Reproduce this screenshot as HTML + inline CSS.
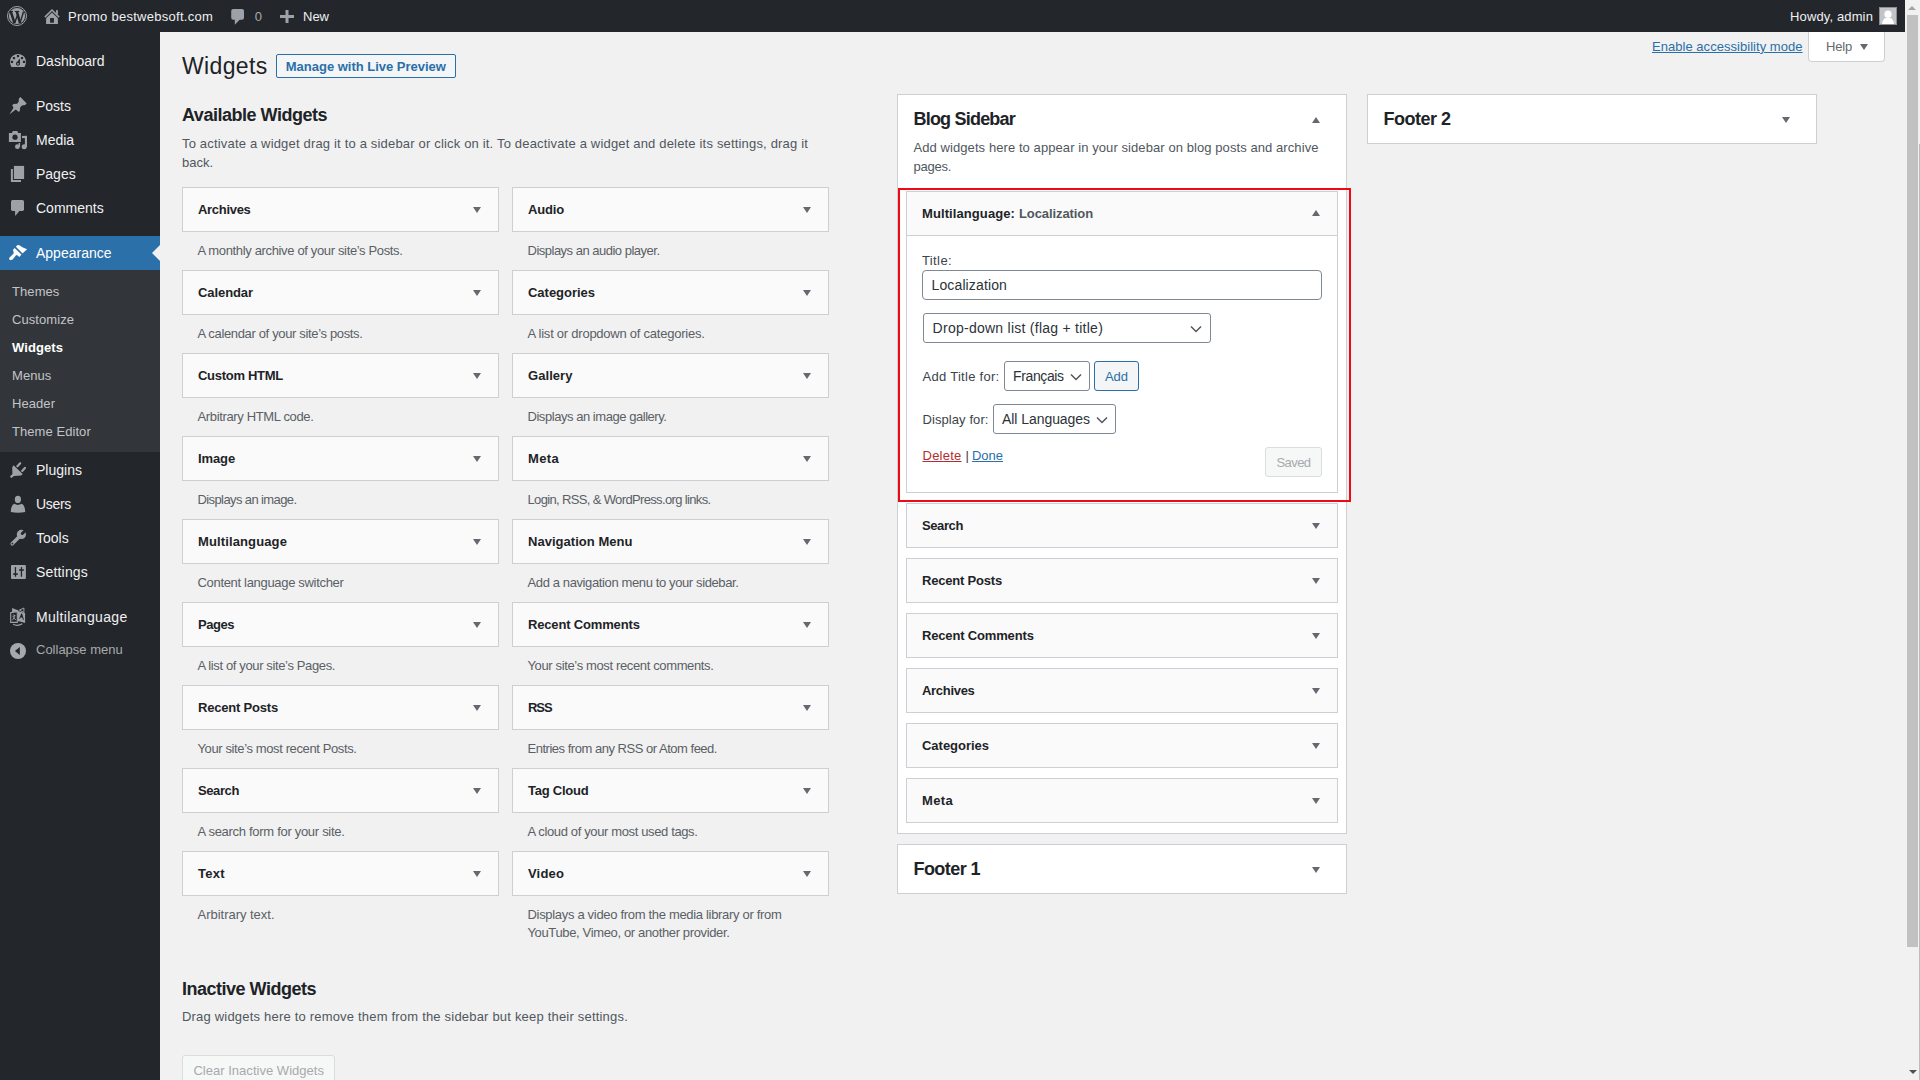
<!DOCTYPE html>
<html><head><meta charset="utf-8"><style>
html,body{margin:0;padding:0;width:1920px;height:1080px;overflow:hidden;background:#f1f1f1;font-family:"Liberation Sans", sans-serif;}
.t{position:absolute;white-space:nowrap;}
</style></head><body>
<div style="position:absolute;left:0px;top:0px;width:1905px;height:32px;background:#23272c;"></div><div style="position:absolute;left:0px;top:32px;width:160px;height:1048px;background:#23272c;"></div><div style="position:absolute;left:0px;top:236px;width:160px;height:34px;background:#2c70aa;"></div><div style="position:absolute;left:0px;top:270px;width:160px;height:182px;background:#32363b;"></div><div style="position:absolute;left:152px;top:245px;width:0;height:0;border-top:8px solid transparent;border-bottom:8px solid transparent;border-right:8px solid #f1f1f1"></div><div style="position:absolute;left:1905px;top:0px;width:15px;height:1080px;background:#f1f1f1;"></div><div style="position:absolute;left:1907px;top:15px;width:11px;height:932px;background:#c1c1c1;"></div><div style="position:absolute;left:1919px;top:144px;width:1px;height:936px;background:#bcbcbc;"></div><div style="position:absolute;left:1908px;top:6px;width:0;height:0;border-left:4px solid transparent;border-right:4px solid transparent;border-bottom:4px solid #a3a3a3"></div><div style="position:absolute;left:1908.5px;top:1070px;width:0;height:0;border-left:4px solid transparent;border-right:4px solid transparent;border-top:4px solid #505050"></div><div style="position:absolute;left:276px;top:54px;width:180px;height:24px;background:#f3f5f6;border:1px solid #2a6fa8;box-sizing:border-box;border-radius:2px;"></div><div style="position:absolute;left:1808px;top:32px;width:77px;height:30px;background:#ffffff;border:1px solid #ccd0d4;box-sizing:border-box;border-top:none;border-radius:0 0 4px 4px;"></div><div style="position:absolute;left:1860.0px;top:44px;width:0;height:0;border-left:4.0px solid transparent;border-right:4.0px solid transparent;border-top:6px solid #646970"></div><div style="position:absolute;left:182px;top:187px;width:317px;height:45px;background:#fafafa;border:1px solid #ccd0d4;box-sizing:border-box;"></div><div style="position:absolute;left:473.0px;top:207px;width:0;height:0;border-left:4.0px solid transparent;border-right:4.0px solid transparent;border-top:6px solid #646970"></div><div style="position:absolute;left:512px;top:187px;width:317px;height:45px;background:#fafafa;border:1px solid #ccd0d4;box-sizing:border-box;"></div><div style="position:absolute;left:803.0px;top:207px;width:0;height:0;border-left:4.0px solid transparent;border-right:4.0px solid transparent;border-top:6px solid #646970"></div><div style="position:absolute;left:182px;top:270px;width:317px;height:45px;background:#fafafa;border:1px solid #ccd0d4;box-sizing:border-box;"></div><div style="position:absolute;left:473.0px;top:290px;width:0;height:0;border-left:4.0px solid transparent;border-right:4.0px solid transparent;border-top:6px solid #646970"></div><div style="position:absolute;left:512px;top:270px;width:317px;height:45px;background:#fafafa;border:1px solid #ccd0d4;box-sizing:border-box;"></div><div style="position:absolute;left:803.0px;top:290px;width:0;height:0;border-left:4.0px solid transparent;border-right:4.0px solid transparent;border-top:6px solid #646970"></div><div style="position:absolute;left:182px;top:353px;width:317px;height:45px;background:#fafafa;border:1px solid #ccd0d4;box-sizing:border-box;"></div><div style="position:absolute;left:473.0px;top:373px;width:0;height:0;border-left:4.0px solid transparent;border-right:4.0px solid transparent;border-top:6px solid #646970"></div><div style="position:absolute;left:512px;top:353px;width:317px;height:45px;background:#fafafa;border:1px solid #ccd0d4;box-sizing:border-box;"></div><div style="position:absolute;left:803.0px;top:373px;width:0;height:0;border-left:4.0px solid transparent;border-right:4.0px solid transparent;border-top:6px solid #646970"></div><div style="position:absolute;left:182px;top:436px;width:317px;height:45px;background:#fafafa;border:1px solid #ccd0d4;box-sizing:border-box;"></div><div style="position:absolute;left:473.0px;top:456px;width:0;height:0;border-left:4.0px solid transparent;border-right:4.0px solid transparent;border-top:6px solid #646970"></div><div style="position:absolute;left:512px;top:436px;width:317px;height:45px;background:#fafafa;border:1px solid #ccd0d4;box-sizing:border-box;"></div><div style="position:absolute;left:803.0px;top:456px;width:0;height:0;border-left:4.0px solid transparent;border-right:4.0px solid transparent;border-top:6px solid #646970"></div><div style="position:absolute;left:182px;top:519px;width:317px;height:45px;background:#fafafa;border:1px solid #ccd0d4;box-sizing:border-box;"></div><div style="position:absolute;left:473.0px;top:539px;width:0;height:0;border-left:4.0px solid transparent;border-right:4.0px solid transparent;border-top:6px solid #646970"></div><div style="position:absolute;left:512px;top:519px;width:317px;height:45px;background:#fafafa;border:1px solid #ccd0d4;box-sizing:border-box;"></div><div style="position:absolute;left:803.0px;top:539px;width:0;height:0;border-left:4.0px solid transparent;border-right:4.0px solid transparent;border-top:6px solid #646970"></div><div style="position:absolute;left:182px;top:602px;width:317px;height:45px;background:#fafafa;border:1px solid #ccd0d4;box-sizing:border-box;"></div><div style="position:absolute;left:473.0px;top:622px;width:0;height:0;border-left:4.0px solid transparent;border-right:4.0px solid transparent;border-top:6px solid #646970"></div><div style="position:absolute;left:512px;top:602px;width:317px;height:45px;background:#fafafa;border:1px solid #ccd0d4;box-sizing:border-box;"></div><div style="position:absolute;left:803.0px;top:622px;width:0;height:0;border-left:4.0px solid transparent;border-right:4.0px solid transparent;border-top:6px solid #646970"></div><div style="position:absolute;left:182px;top:685px;width:317px;height:45px;background:#fafafa;border:1px solid #ccd0d4;box-sizing:border-box;"></div><div style="position:absolute;left:473.0px;top:705px;width:0;height:0;border-left:4.0px solid transparent;border-right:4.0px solid transparent;border-top:6px solid #646970"></div><div style="position:absolute;left:512px;top:685px;width:317px;height:45px;background:#fafafa;border:1px solid #ccd0d4;box-sizing:border-box;"></div><div style="position:absolute;left:803.0px;top:705px;width:0;height:0;border-left:4.0px solid transparent;border-right:4.0px solid transparent;border-top:6px solid #646970"></div><div style="position:absolute;left:182px;top:768px;width:317px;height:45px;background:#fafafa;border:1px solid #ccd0d4;box-sizing:border-box;"></div><div style="position:absolute;left:473.0px;top:788px;width:0;height:0;border-left:4.0px solid transparent;border-right:4.0px solid transparent;border-top:6px solid #646970"></div><div style="position:absolute;left:512px;top:768px;width:317px;height:45px;background:#fafafa;border:1px solid #ccd0d4;box-sizing:border-box;"></div><div style="position:absolute;left:803.0px;top:788px;width:0;height:0;border-left:4.0px solid transparent;border-right:4.0px solid transparent;border-top:6px solid #646970"></div><div style="position:absolute;left:182px;top:851px;width:317px;height:45px;background:#fafafa;border:1px solid #ccd0d4;box-sizing:border-box;"></div><div style="position:absolute;left:473.0px;top:871px;width:0;height:0;border-left:4.0px solid transparent;border-right:4.0px solid transparent;border-top:6px solid #646970"></div><div style="position:absolute;left:512px;top:851px;width:317px;height:45px;background:#fafafa;border:1px solid #ccd0d4;box-sizing:border-box;"></div><div style="position:absolute;left:803.0px;top:871px;width:0;height:0;border-left:4.0px solid transparent;border-right:4.0px solid transparent;border-top:6px solid #646970"></div><div style="position:absolute;left:182px;top:1055px;width:153px;height:40px;background:#f6f7f7;border:1px solid #dcdcde;box-sizing:border-box;border-radius:3px;"></div><div style="position:absolute;left:897px;top:94px;width:450px;height:740px;background:#ffffff;border:1px solid #ccd0d4;box-sizing:border-box;"></div><div style="position:absolute;left:1312.0px;top:116.5px;width:0;height:0;border-left:4.0px solid transparent;border-right:4.0px solid transparent;border-bottom:6px solid #646970"></div><div style="position:absolute;left:906px;top:191px;width:432px;height:302px;background:#ffffff;border:1px solid #ccd0d4;box-sizing:border-box;"></div><div style="position:absolute;left:906px;top:191px;width:432px;height:45px;background:#fafafa;border:1px solid #ccd0d4;box-sizing:border-box;"></div><div style="position:absolute;left:1312.0px;top:210px;width:0;height:0;border-left:4.0px solid transparent;border-right:4.0px solid transparent;border-bottom:6px solid #646970"></div><div style="position:absolute;left:922px;top:270px;width:400px;height:30px;background:#ffffff;border:1px solid #7e8993;box-sizing:border-box;border-radius:4px;"></div><div style="position:absolute;left:923px;top:313px;width:288px;height:30px;background:#ffffff;border:1px solid #7e8993;box-sizing:border-box;border-radius:3px;"></div><div style="position:absolute;left:1004px;top:361px;width:86px;height:30px;background:#ffffff;border:1px solid #7e8993;box-sizing:border-box;border-radius:3px;"></div><div style="position:absolute;left:1094px;top:361px;width:45px;height:30px;background:#f3f5f6;border:1px solid #2a6fa8;box-sizing:border-box;border-radius:3px;"></div><div style="position:absolute;left:993px;top:404px;width:123px;height:30px;background:#ffffff;border:1px solid #7e8993;box-sizing:border-box;border-radius:3px;"></div><div style="position:absolute;left:1265px;top:447px;width:57px;height:30px;background:#f6f7f7;border:1px solid #dcdcde;box-sizing:border-box;border-radius:3px;"></div><svg style="position:absolute;left:1190px;top:324.5px" width="12" height="8" viewBox="0 0 12 8"><path d="M1 1.5 L6 6.5 L11 1.5" fill="none" stroke="#50575e" stroke-width="1.5"/></svg><svg style="position:absolute;left:1069.8px;top:372.5px" width="12" height="8" viewBox="0 0 12 8"><path d="M1 1.5 L6 6.5 L11 1.5" fill="none" stroke="#50575e" stroke-width="1.5"/></svg><svg style="position:absolute;left:1095.8px;top:415.5px" width="12" height="8" viewBox="0 0 12 8"><path d="M1 1.5 L6 6.5 L11 1.5" fill="none" stroke="#50575e" stroke-width="1.5"/></svg><div style="position:absolute;left:906px;top:503px;width:432px;height:45px;background:#fafafa;border:1px solid #ccd0d4;box-sizing:border-box;"></div><div style="position:absolute;left:1312.0px;top:523px;width:0;height:0;border-left:4.0px solid transparent;border-right:4.0px solid transparent;border-top:6px solid #646970"></div><div style="position:absolute;left:906px;top:558px;width:432px;height:45px;background:#fafafa;border:1px solid #ccd0d4;box-sizing:border-box;"></div><div style="position:absolute;left:1312.0px;top:578px;width:0;height:0;border-left:4.0px solid transparent;border-right:4.0px solid transparent;border-top:6px solid #646970"></div><div style="position:absolute;left:906px;top:613px;width:432px;height:45px;background:#fafafa;border:1px solid #ccd0d4;box-sizing:border-box;"></div><div style="position:absolute;left:1312.0px;top:633px;width:0;height:0;border-left:4.0px solid transparent;border-right:4.0px solid transparent;border-top:6px solid #646970"></div><div style="position:absolute;left:906px;top:668px;width:432px;height:45px;background:#fafafa;border:1px solid #ccd0d4;box-sizing:border-box;"></div><div style="position:absolute;left:1312.0px;top:688px;width:0;height:0;border-left:4.0px solid transparent;border-right:4.0px solid transparent;border-top:6px solid #646970"></div><div style="position:absolute;left:906px;top:723px;width:432px;height:45px;background:#fafafa;border:1px solid #ccd0d4;box-sizing:border-box;"></div><div style="position:absolute;left:1312.0px;top:743px;width:0;height:0;border-left:4.0px solid transparent;border-right:4.0px solid transparent;border-top:6px solid #646970"></div><div style="position:absolute;left:906px;top:778px;width:432px;height:45px;background:#fafafa;border:1px solid #ccd0d4;box-sizing:border-box;"></div><div style="position:absolute;left:1312.0px;top:798px;width:0;height:0;border-left:4.0px solid transparent;border-right:4.0px solid transparent;border-top:6px solid #646970"></div><div style="position:absolute;left:898px;top:188px;width:453px;height:314px;background:transparent;border:2px solid #ee0a12;box-sizing:border-box;"></div><div style="position:absolute;left:897px;top:844px;width:450px;height:50px;background:#ffffff;border:1px solid #ccd0d4;box-sizing:border-box;"></div><div style="position:absolute;left:1312.0px;top:867px;width:0;height:0;border-left:4.0px solid transparent;border-right:4.0px solid transparent;border-top:6px solid #646970"></div><div style="position:absolute;left:1367px;top:94px;width:450px;height:50px;background:#ffffff;border:1px solid #ccd0d4;box-sizing:border-box;"></div><div style="position:absolute;left:1782.0px;top:116.5px;width:0;height:0;border-left:4.0px solid transparent;border-right:4.0px solid transparent;border-top:6px solid #646970"></div><svg style="position:absolute;left:0;top:0" width="1920" height="1080" viewBox="0 0 1920 1080">
<g fill="#9ca2a7">
<!-- WP logo -->
<circle cx="17" cy="16" r="9.5" fill="none" stroke="#9ca2a7" stroke-width="1"/>
<circle cx="17" cy="16" r="8.1"/>
<g stroke="#23272c" stroke-linecap="butt" fill="none">
<line x1="10.7" y1="11.5" x2="14.55" y2="23.1" stroke-width="2.5"/>
<line x1="14.55" y1="23.1" x2="17.4" y2="15.6" stroke-width="1.4"/>
<line x1="16.8" y1="11.3" x2="20.05" y2="23.1" stroke-width="2.5"/>
<line x1="20.05" y1="23.1" x2="23.5" y2="11.7" stroke-width="1.4"/>
</g>
<rect x="9.05" y="10.9" width="3.9" height="1.1" fill="#23272c"/>
<rect x="14.8" y="10.9" width="4.4" height="1.1" fill="#23272c"/>
<!-- home -->
<polyline points="45.4,16.6 52,10 58.6,16.6" fill="none" stroke="#9ca2a7" stroke-width="1.5" stroke-linecap="square"/>
<rect x="56.1" y="10.1" width="1.8" height="4"/>
<path d="M52 12.5 L46.1 18.3 L46.1 24 L57.9 24 L57.9 18.3 Z"/>
<rect x="50.1" y="18" width="3.8" height="4.7" fill="#23272c"/>
<!-- comment bubble admin bar -->
<rect x="231.2" y="9" width="12.8" height="10.8" rx="2"/>
<path d="M234.8 19 L234.8 24.8 L240.4 19 Z"/>
<!-- plus -->
<rect x="280" y="15" width="14" height="3"/>
<rect x="285.5" y="10" width="3" height="13"/>
<!-- avatar -->
<rect x="1879.5" y="7.5" width="17" height="17" fill="#c3c4c7" stroke="#8c8f94" stroke-width="1"/>
<circle cx="1888" cy="14.2" r="3.6" fill="#fff"/>
<path d="M1882 24 C1882.5 19.5 1885 17.6 1888 17.6 C1891 17.6 1893.5 19.5 1894 24 Z" fill="#fff"/>

<!-- dashboard gauge -->
<path d="M11.5 67 C9.3 63 9.6 58.6 12.6 56 C15.6 53.2 20.4 53.2 23.4 56 C26.4 58.6 26.7 63 24.5 67 Z"/>
<g fill="#23272c">
<rect x="16.9" y="55" width="2.2" height="2.2"/>
<rect x="12.9" y="57" width="2.2" height="2.2"/>
<rect x="20.9" y="57" width="2.2" height="2.2"/>
<rect x="10.9" y="60.8" width="2.2" height="2.2"/>
<rect x="22.9" y="60.8" width="2.2" height="2.2"/>
<path d="M19.9 58.4 L20 63.6 C20 65 19.1 65.8 18 65.8 C16.9 65.8 16 65 16 63.8 C16 62.9 16.5 62.2 17.2 61.8 Z"/>
</g>
<circle cx="18" cy="63.8" r="0.9"/>
<!-- posts pin -->
<path d="M20.44 97.11 L26.67 103.56 L25.11 105.11 L22 105.56 L20.22 107.33 L19.78 111.33 L18.44 111.78 L15.78 109.56 L9.33 114.44 L13.56 107.78 L12.22 105.33 L13.56 104 L17.11 103.78 L18.67 101.78 L18.89 98.44 Z"/>
<!-- media -->
<path d="M8.9 132.9 L12 132.9 L12.8 130.9 L17.3 130.9 L18.1 132.9 L20.9 132.9 L20.9 142 L8.9 142 Z"/>
<circle cx="15" cy="137.2" r="2.6" fill="#23272c"/>
<rect x="22" y="135.9" width="5" height="2.2"/>
<rect x="24.9" y="135.9" width="2.1" height="11"/>
<circle cx="24.2" cy="146.7" r="2.5"/>
<rect x="18.6" y="143" width="1.5" height="4"/>
<circle cx="17.4" cy="146.7" r="2.4"/>
<!-- pages -->
<rect x="13.9" y="165.9" width="10.2" height="13.1"/>
<path d="M10.9 168.9 L12.9 168.9 L12.9 180 L21 180 L21 182 L10.9 182 Z"/>
<!-- comments -->
<rect x="11" y="200" width="13" height="10.9" rx="1.6"/>
<path d="M15 210 L15.2 216 L20.2 210 Z"/>
<!-- plugins -->
<path d="M13.56 465.33 L22.67 474 L21.11 475.56 L14.44 476 L12.44 474.89 L12.22 467.56 Z"/>
<line x1="11.4" y1="476.6" x2="13.4" y2="474.8" stroke="#9ca2a7" stroke-width="2.4" stroke-linecap="round"/>
<line x1="17.4" y1="466.2" x2="20.2" y2="463.2" stroke="#9ca2a7" stroke-width="2.2" stroke-linecap="round"/>
<line x1="22.2" y1="470.9" x2="24.9" y2="467.9" stroke="#9ca2a7" stroke-width="2.2" stroke-linecap="round"/>
<!-- users -->
<ellipse cx="17.9" cy="499.4" rx="3.1" ry="3.7"/>
<path d="M10.8 512 C10.8 507 12.5 504.2 14.8 503.8 C16 505.3 19.8 505.3 21.2 503.8 C23.5 504.2 25.2 507 25.2 512 C20.5 513 15.5 513 10.8 512 Z"/>
<!-- tools -->
<line x1="20" y1="536" x2="12.2" y2="543.8" stroke="#9ca2a7" stroke-width="3.6" stroke-linecap="round"/>
<circle cx="21.4" cy="534.4" r="4.6"/>
<line x1="22.3" y1="533.5" x2="26.5" y2="529.3" stroke="#23272c" stroke-width="3" stroke-linecap="round"/>
<circle cx="12.4" cy="543.6" r="0.9" fill="#23272c"/>
<!-- settings -->
<rect x="11" y="565" width="14.9" height="14" rx="1"/>
<g fill="#23272c">
<rect x="14.8" y="567.1" width="1.3" height="9.6"/>
<rect x="13.2" y="573.3" width="4.6" height="1.6"/>
<rect x="20.8" y="567.1" width="1.3" height="9.6"/>
<rect x="19.1" y="569.2" width="4.7" height="1.6"/>
</g>
<!-- multilanguage -->
<path d="M12.07 608.04 L18.6 610.5 L18.2 612 L12.07 612.1 Z"/>
<path d="M19.4 610.07 L23.9 608.04 L23.9 612.5 Z" fill="none" stroke="#9ca2a7" stroke-width="1"/>
<path d="M10.7 612.6 L17.3 611.7 L17.3 622.4 L10.7 622.4 Z" fill="none" stroke="#9ca2a7" stroke-width="1.1"/>
<path d="M17.57 611.1 L25.1 612.9 L25.1 622.9 L20.2 621.5 L17.57 621.3 Z"/>
<path d="M19.1 618.7 L21.3 613.6 L22.1 613.6 L24 619.8 L22.9 619.7 L22.3 617.6 L20.6 617.6 L20 618.8 Z" fill="#23272c"/>
<g stroke="#9ca2a7" stroke-width="0.9" fill="none">
<path d="M13.2 614.8 L15.6 615.8"/>
<path d="M12.4 616.2 L14.8 617.4"/>
<path d="M14.4 615 L13.9 617.8 L12.5 620.2"/>
<path d="M14.2 618 L15.8 620"/>
</g>
<path d="M13.1 624.2 Q17.6 626.6 22.3 623.7" fill="none" stroke="#9ca2a7" stroke-width="1.2"/>
<!-- collapse -->
<circle cx="18" cy="651" r="8" fill="#a7aaad"/>
<path d="M14.9 651 L19.8 647.1 L19.8 654.9 Z" fill="#23272c"/>
</g>
<!-- appearance brush (white) -->
<g fill="#ffffff">
<path d="M15.78 246.67 L17.56 245.11 L19.33 245.33 L22.89 247.56 L27.11 249.33 L22.44 253.56 Z"/>
<path d="M12.89 250 L14.67 248 L21.56 254.44 L19.33 256.89 L17.56 255.56 L16.22 255.11 L12.67 259.56 L10.44 260.22 L9.11 259.33 L9.33 257.78 L13.78 253.33 L13.33 251.11 Z"/>
</g>
<line x1="15.4" y1="247.4" x2="22.3" y2="254.2" stroke="#2c70aa" stroke-width="1.1"/>
</svg>

<div class="t" id="t0" style="left:68px;top:8.50px;font-size:13px;line-height:16px;font-weight:400;color:#f0f0f1;letter-spacing:0.264px;">Promo bestwebsoft.com</div><div class="t" id="t1" style="left:254.8px;top:8.50px;font-size:13px;line-height:16px;font-weight:400;color:#a7aaad;letter-spacing:-1.034px;">0</div><div class="t" id="t2" style="left:303px;top:8.50px;font-size:13px;line-height:16px;font-weight:400;color:#f0f0f1;letter-spacing:-0.005px;">New</div><div class="t" id="t3" style="left:1790px;top:8.50px;font-size:13px;line-height:16px;font-weight:400;color:#f0f0f1;letter-spacing:0.133px;">Howdy, admin</div><div class="t" id="t4" style="left:36px;top:52.15px;font-size:14px;line-height:18px;font-weight:400;color:#f0f0f1;letter-spacing:0.000px;">Dashboard</div><div class="t" id="t5" style="left:36px;top:97.15px;font-size:14px;line-height:18px;font-weight:400;color:#f0f0f1;letter-spacing:0.000px;">Posts</div><div class="t" id="t6" style="left:36px;top:131.15px;font-size:14px;line-height:18px;font-weight:400;color:#f0f0f1;letter-spacing:0.000px;">Media</div><div class="t" id="t7" style="left:36px;top:165.15px;font-size:14px;line-height:18px;font-weight:400;color:#f0f0f1;letter-spacing:0.000px;">Pages</div><div class="t" id="t8" style="left:36px;top:199.15px;font-size:14px;line-height:18px;font-weight:400;color:#f0f0f1;letter-spacing:0.000px;">Comments</div><div class="t" id="t9" style="left:36px;top:244.15px;font-size:14px;line-height:18px;font-weight:400;color:#ffffff;letter-spacing:0.000px;">Appearance</div><div class="t" id="t10" style="left:36px;top:460.65px;font-size:14px;line-height:18px;font-weight:400;color:#f0f0f1;letter-spacing:0.000px;">Plugins</div><div class="t" id="t11" style="left:36px;top:494.65px;font-size:14px;line-height:18px;font-weight:400;color:#f0f0f1;letter-spacing:-0.312px;">Users</div><div class="t" id="t12" style="left:36px;top:528.65px;font-size:14px;line-height:18px;font-weight:400;color:#f0f0f1;letter-spacing:0.000px;">Tools</div><div class="t" id="t13" style="left:36px;top:562.65px;font-size:14px;line-height:18px;font-weight:400;color:#f0f0f1;letter-spacing:0.176px;">Settings</div><div class="t" id="t14" style="left:36px;top:608.15px;font-size:14px;line-height:18px;font-weight:400;color:#f0f0f1;letter-spacing:0.333px;">Multilanguage</div><div class="t" id="t15" style="left:12px;top:283.50px;font-size:13px;line-height:16px;font-weight:400;color:#c3c4c7;letter-spacing:0.078px;">Themes</div><div class="t" id="t16" style="left:12px;top:311.50px;font-size:13px;line-height:16px;font-weight:400;color:#c3c4c7;letter-spacing:0.068px;">Customize</div><div class="t" id="t17" style="left:12px;top:339.50px;font-size:13px;line-height:16px;font-weight:700;color:#ffffff;letter-spacing:0.072px;">Widgets</div><div class="t" id="t18" style="left:12px;top:367.50px;font-size:13px;line-height:16px;font-weight:400;color:#c3c4c7;letter-spacing:0.078px;">Menus</div><div class="t" id="t19" style="left:12px;top:395.50px;font-size:13px;line-height:16px;font-weight:400;color:#c3c4c7;letter-spacing:0.071px;">Header</div><div class="t" id="t20" style="left:12px;top:423.50px;font-size:13px;line-height:16px;font-weight:400;color:#c3c4c7;letter-spacing:0.065px;">Theme Editor</div><div class="t" id="t21" style="left:36px;top:642.00px;font-size:13px;line-height:16px;font-weight:400;color:#a7aaad;letter-spacing:0.000px;">Collapse menu</div><div class="t" id="t22" style="left:182px;top:51.83px;font-size:23px;line-height:29px;font-weight:400;color:#1d2327;letter-spacing:0.344px;">Widgets</div><div class="t" id="t23" style="left:285.8px;top:58.50px;font-size:13px;line-height:16px;font-weight:700;color:#2a6fa8;letter-spacing:-0.016px;">Manage with Live Preview</div><div class="t" id="t24" style="left:1652px;top:38.50px;font-size:13px;line-height:16px;font-weight:400;color:#2a6fa8;letter-spacing:0.037px;text-decoration:underline;">Enable accessibility mode</div><div class="t" id="t25" style="left:1826px;top:39.00px;font-size:13px;line-height:16px;font-weight:400;color:#646970;letter-spacing:-0.188px;">Help</div><div class="t" id="t26" style="left:182px;top:103.96px;font-size:18px;line-height:22px;font-weight:700;color:#1d2327;letter-spacing:-0.483px;">Available Widgets</div><div class="t" id="t27" style="left:182px;top:135.50px;font-size:13px;line-height:16px;font-weight:400;color:#50575e;letter-spacing:0.177px;">To activate a widget drag it to a sidebar or click on it. To deactivate a widget and delete its settings, drag it</div><div class="t" id="t28" style="left:182px;top:154.50px;font-size:13px;line-height:16px;font-weight:400;color:#50575e;letter-spacing:0.000px;">back.</div><div class="t" id="t29" style="left:198px;top:201.50px;font-size:13px;line-height:16px;font-weight:700;color:#1d2327;letter-spacing:-0.303px;">Archives</div><div class="t" id="t30" style="left:197.5px;top:243.20px;font-size:13px;line-height:16px;font-weight:400;color:#5a6066;letter-spacing:-0.351px;">A monthly archive of your site’s Posts.</div><div class="t" id="t31" style="left:528px;top:201.50px;font-size:13px;line-height:16px;font-weight:700;color:#1d2327;letter-spacing:-0.166px;">Audio</div><div class="t" id="t32" style="left:527.5px;top:243.20px;font-size:13px;line-height:16px;font-weight:400;color:#5a6066;letter-spacing:-0.501px;">Displays an audio player.</div><div class="t" id="t33" style="left:198px;top:284.50px;font-size:13px;line-height:16px;font-weight:700;color:#1d2327;letter-spacing:-0.080px;">Calendar</div><div class="t" id="t34" style="left:197.5px;top:326.20px;font-size:13px;line-height:16px;font-weight:400;color:#5a6066;letter-spacing:-0.346px;">A calendar of your site’s posts.</div><div class="t" id="t35" style="left:528px;top:284.50px;font-size:13px;line-height:16px;font-weight:700;color:#1d2327;letter-spacing:-0.020px;">Categories</div><div class="t" id="t36" style="left:527.5px;top:326.20px;font-size:13px;line-height:16px;font-weight:400;color:#5a6066;letter-spacing:-0.242px;">A list or dropdown of categories.</div><div class="t" id="t37" style="left:198px;top:367.50px;font-size:13px;line-height:16px;font-weight:700;color:#1d2327;letter-spacing:-0.283px;">Custom HTML</div><div class="t" id="t38" style="left:197.5px;top:409.20px;font-size:13px;line-height:16px;font-weight:400;color:#5a6066;letter-spacing:-0.353px;">Arbitrary HTML code.</div><div class="t" id="t39" style="left:528px;top:367.50px;font-size:13px;line-height:16px;font-weight:700;color:#1d2327;letter-spacing:0.058px;">Gallery</div><div class="t" id="t40" style="left:527.5px;top:409.20px;font-size:13px;line-height:16px;font-weight:400;color:#5a6066;letter-spacing:-0.453px;">Displays an image gallery.</div><div class="t" id="t41" style="left:198px;top:450.50px;font-size:13px;line-height:16px;font-weight:700;color:#1d2327;letter-spacing:-0.116px;">Image</div><div class="t" id="t42" style="left:197.5px;top:492.20px;font-size:13px;line-height:16px;font-weight:400;color:#5a6066;letter-spacing:-0.602px;">Displays an image.</div><div class="t" id="t43" style="left:528px;top:450.50px;font-size:13px;line-height:16px;font-weight:700;color:#1d2327;letter-spacing:0.344px;">Meta</div><div class="t" id="t44" style="left:527.5px;top:492.20px;font-size:13px;line-height:16px;font-weight:400;color:#5a6066;letter-spacing:-0.646px;">Login, RSS, &amp; WordPress.org links.</div><div class="t" id="t45" style="left:198px;top:533.50px;font-size:13px;line-height:16px;font-weight:700;color:#1d2327;letter-spacing:0.124px;">Multilanguage</div><div class="t" id="t46" style="left:197.5px;top:575.20px;font-size:13px;line-height:16px;font-weight:400;color:#5a6066;letter-spacing:-0.318px;">Content language switcher</div><div class="t" id="t47" style="left:528px;top:533.50px;font-size:13px;line-height:16px;font-weight:700;color:#1d2327;letter-spacing:0.032px;">Navigation Menu</div><div class="t" id="t48" style="left:527.5px;top:575.20px;font-size:13px;line-height:16px;font-weight:400;color:#5a6066;letter-spacing:-0.381px;">Add a navigation menu to your sidebar.</div><div class="t" id="t49" style="left:198px;top:616.50px;font-size:13px;line-height:16px;font-weight:700;color:#1d2327;letter-spacing:-0.463px;">Pages</div><div class="t" id="t50" style="left:197.5px;top:658.20px;font-size:13px;line-height:16px;font-weight:400;color:#5a6066;letter-spacing:-0.371px;">A list of your site’s Pages.</div><div class="t" id="t51" style="left:528px;top:616.50px;font-size:13px;line-height:16px;font-weight:700;color:#1d2327;letter-spacing:-0.163px;">Recent Comments</div><div class="t" id="t52" style="left:527.5px;top:658.20px;font-size:13px;line-height:16px;font-weight:400;color:#5a6066;letter-spacing:-0.363px;">Your site’s most recent comments.</div><div class="t" id="t53" style="left:198px;top:699.50px;font-size:13px;line-height:16px;font-weight:700;color:#1d2327;letter-spacing:-0.198px;">Recent Posts</div><div class="t" id="t54" style="left:197.5px;top:741.20px;font-size:13px;line-height:16px;font-weight:400;color:#5a6066;letter-spacing:-0.384px;">Your site’s most recent Posts.</div><div class="t" id="t55" style="left:528px;top:699.50px;font-size:13px;line-height:16px;font-weight:700;color:#1d2327;letter-spacing:-1.078px;">RSS</div><div class="t" id="t56" style="left:527.5px;top:741.20px;font-size:13px;line-height:16px;font-weight:400;color:#5a6066;letter-spacing:-0.483px;">Entries from any RSS or Atom feed.</div><div class="t" id="t57" style="left:198px;top:782.50px;font-size:13px;line-height:16px;font-weight:700;color:#1d2327;letter-spacing:-0.396px;">Search</div><div class="t" id="t58" style="left:197.5px;top:824.20px;font-size:13px;line-height:16px;font-weight:400;color:#5a6066;letter-spacing:-0.298px;">A search form for your site.</div><div class="t" id="t59" style="left:528px;top:782.50px;font-size:13px;line-height:16px;font-weight:700;color:#1d2327;letter-spacing:-0.233px;">Tag Cloud</div><div class="t" id="t60" style="left:527.5px;top:824.20px;font-size:13px;line-height:16px;font-weight:400;color:#5a6066;letter-spacing:-0.367px;">A cloud of your most used tags.</div><div class="t" id="t61" style="left:198px;top:865.50px;font-size:13px;line-height:16px;font-weight:700;color:#1d2327;letter-spacing:0.309px;">Text</div><div class="t" id="t62" style="left:197.5px;top:907.20px;font-size:13px;line-height:16px;font-weight:400;color:#5a6066;letter-spacing:-0.020px;">Arbitrary text.</div><div class="t" id="t63" style="left:528px;top:865.50px;font-size:13px;line-height:16px;font-weight:700;color:#1d2327;letter-spacing:0.166px;">Video</div><div class="t" id="t64" style="left:527.5px;top:907.20px;font-size:13px;line-height:16px;font-weight:400;color:#5a6066;letter-spacing:-0.314px;">Displays a video from the media library or from</div><div class="t" id="t65" style="left:527.5px;top:925.20px;font-size:13px;line-height:16px;font-weight:400;color:#5a6066;letter-spacing:-0.358px;">YouTube, Vimeo, or another provider.</div><div class="t" id="t66" style="left:182px;top:977.76px;font-size:18px;line-height:22px;font-weight:700;color:#1d2327;letter-spacing:-0.492px;">Inactive Widgets</div><div class="t" id="t67" style="left:182px;top:1009.00px;font-size:13px;line-height:16px;font-weight:400;color:#50575e;letter-spacing:0.197px;">Drag widgets here to remove them from the sidebar but keep their settings.</div><div class="t" id="t68" style="left:193.4px;top:1063.00px;font-size:13px;line-height:16px;font-weight:400;color:#a7aaad;letter-spacing:0.024px;">Clear Inactive Widgets</div><div class="t" id="t69" style="left:913.5px;top:107.76px;font-size:18px;line-height:22px;font-weight:700;color:#1d2327;letter-spacing:-0.793px;">Blog Sidebar</div><div class="t" id="t70" style="left:913.5px;top:139.50px;font-size:13px;line-height:16px;font-weight:400;color:#50575e;letter-spacing:0.079px;">Add widgets here to appear in your sidebar on blog posts and archive</div><div class="t" id="t71" style="left:913.5px;top:159.00px;font-size:13px;line-height:16px;font-weight:400;color:#50575e;letter-spacing:-0.258px;">pages.</div><div class="t" id="t72" style="left:922px;top:206.00px;font-size:13px;line-height:16px;font-weight:700;color:#1d2327;letter-spacing:0.092px;">Multilanguage:</div><div class="t" id="t73" style="left:1019px;top:206.00px;font-size:13px;line-height:16px;font-weight:700;color:#50575e;letter-spacing:-0.094px;">Localization</div><div class="t" id="t74" style="left:922px;top:253.10px;font-size:13px;line-height:16px;font-weight:400;color:#3c434a;letter-spacing:0.383px;">Title:</div><div class="t" id="t75" style="left:931.5px;top:276.15px;font-size:14px;line-height:18px;font-weight:400;color:#2c3338;letter-spacing:0.130px;">Localization</div><div class="t" id="t76" style="left:932.6px;top:319.15px;font-size:14px;line-height:18px;font-weight:400;color:#2c3338;letter-spacing:0.258px;">Drop-down list (flag + title)</div><div class="t" id="t77" style="left:922.5px;top:368.75px;font-size:13px;line-height:16px;font-weight:400;color:#3c434a;letter-spacing:0.287px;">Add Title for:</div><div class="t" id="t78" style="left:1013px;top:367.15px;font-size:14px;line-height:18px;font-weight:400;color:#2c3338;letter-spacing:-0.367px;">Français</div><div class="t" id="t79" style="left:1105px;top:368.50px;font-size:13px;line-height:16px;font-weight:400;color:#2a6fa8;letter-spacing:-0.047px;">Add</div><div class="t" id="t80" style="left:922.5px;top:411.50px;font-size:13px;line-height:16px;font-weight:400;color:#3c434a;letter-spacing:0.081px;">Display for:</div><div class="t" id="t81" style="left:1002px;top:410.15px;font-size:14px;line-height:18px;font-weight:400;color:#2c3338;letter-spacing:-0.058px;">All Languages</div><div class="t" id="t82" style="left:922.5px;top:447.50px;font-size:13px;line-height:16px;font-weight:400;color:#b32d2e;letter-spacing:0.237px;text-decoration:underline;">Delete</div><div class="t" id="t83" style="left:965.5px;top:447.50px;font-size:13px;line-height:16px;font-weight:400;color:#3c434a;letter-spacing:0.000px;">|</div><div class="t" id="t84" style="left:972px;top:447.50px;font-size:13px;line-height:16px;font-weight:400;color:#2a6fa8;letter-spacing:-0.020px;text-decoration:underline;">Done</div><div class="t" id="t85" style="left:1276.5px;top:454.50px;font-size:13px;line-height:16px;font-weight:400;color:#a7aaad;letter-spacing:-0.575px;">Saved</div><div class="t" id="t86" style="left:922px;top:517.50px;font-size:13px;line-height:16px;font-weight:700;color:#1d2327;letter-spacing:-0.396px;">Search</div><div class="t" id="t87" style="left:922px;top:572.50px;font-size:13px;line-height:16px;font-weight:700;color:#1d2327;letter-spacing:-0.198px;">Recent Posts</div><div class="t" id="t88" style="left:922px;top:627.50px;font-size:13px;line-height:16px;font-weight:700;color:#1d2327;letter-spacing:-0.163px;">Recent Comments</div><div class="t" id="t89" style="left:922px;top:682.50px;font-size:13px;line-height:16px;font-weight:700;color:#1d2327;letter-spacing:-0.303px;">Archives</div><div class="t" id="t90" style="left:922px;top:737.50px;font-size:13px;line-height:16px;font-weight:700;color:#1d2327;letter-spacing:-0.020px;">Categories</div><div class="t" id="t91" style="left:922px;top:792.50px;font-size:13px;line-height:16px;font-weight:700;color:#1d2327;letter-spacing:0.344px;">Meta</div><div class="t" id="t92" style="left:913.5px;top:858.26px;font-size:18px;line-height:22px;font-weight:700;color:#1d2327;letter-spacing:-0.564px;">Footer 1</div><div class="t" id="t93" style="left:1383.5px;top:107.76px;font-size:18px;line-height:22px;font-weight:700;color:#1d2327;letter-spacing:-0.502px;">Footer 2</div>
</body></html>
